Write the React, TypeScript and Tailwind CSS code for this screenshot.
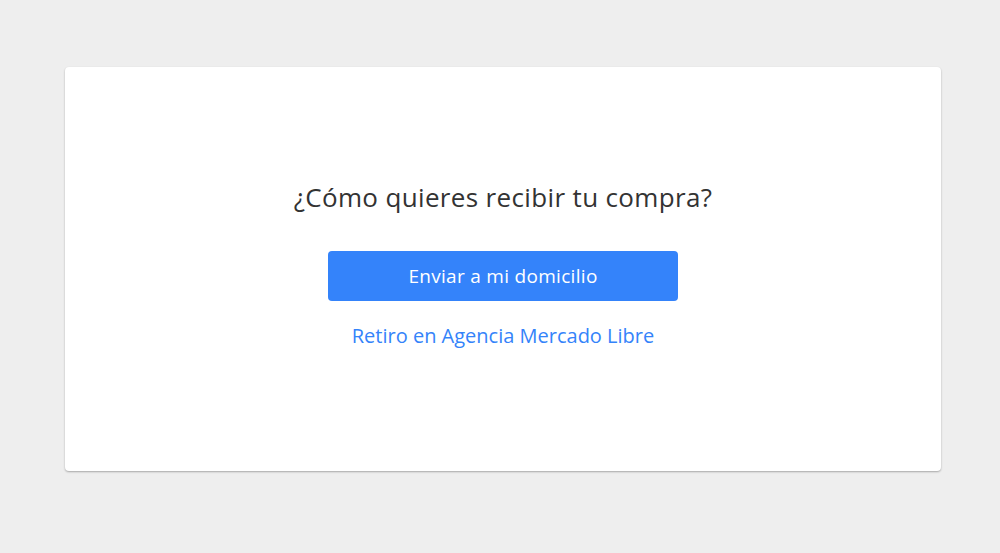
import React from "react"

const App: React.FC = () => {
  return (
    <div className="min-h-[553px] w-full bg-[#eeeeee] pt-[67px] font-['Open_Sans',sans-serif]">
      <div className="ml-[65px] flex h-[404px] w-[876px] flex-col items-center rounded-[4px] bg-white pt-[111px] shadow-[0_1px_2px_rgba(0,0,0,0.3)]">
        <h1 className="text-[26px] leading-[38px] font-medium tracking-[0.35px] text-[#333333]">¿Cómo quieres recibir tu compra?</h1>
        <button className="mt-[35px] h-[50px] w-[350px] rounded-[4px] bg-[#3483fa] text-[19px] tracking-[0.3px] text-white">
          Enviar a mi domicilio
        </button>
        <a className="mt-[22px] cursor-pointer text-[20px] leading-[26px] text-[#3483fa]">Retiro en Agencia Mercado Libre</a>
      </div>
    </div>
  )
}

export default App
